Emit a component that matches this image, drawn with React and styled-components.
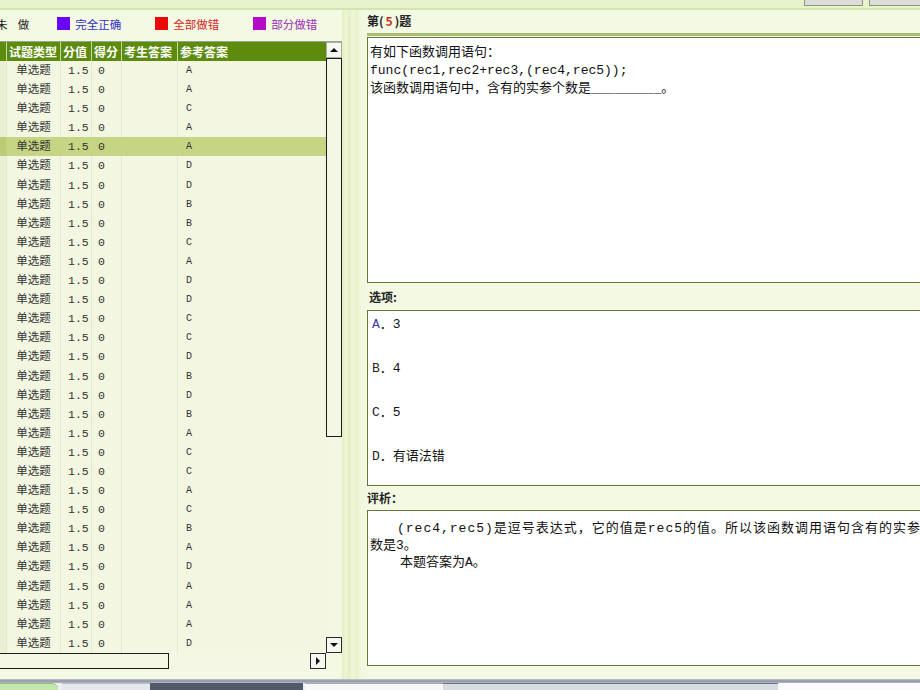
import React from 'react';
import styled, { createGlobalStyle } from 'styled-components';

const GlobalStyle = createGlobalStyle`
    html, body { margin: 0; padding: 0; }
    body {
        background: #f3f9e2;
        font-family: "Noto Sans CJK SC", sans-serif;
        overflow: hidden;
    }
`;

const MONO = `"Liberation Mono", "Noto Sans CJK SC", monospace`;

const Screen = styled.div`
    width: 920px;
    height: 690px;
    display: flex;
    flex-direction: column;
    overflow: hidden;
    background: #f3f9e2;
`;

const TopStrip = styled.div`
    height: 8px;
    flex: none;
    background: #e8f3cd;
    border-bottom: 2px solid #d3e5ae;
    display: flex;
    justify-content: flex-end;
    gap: 6px;
    margin-right: -8px;
`;

const TopButton = styled.div`
    width: 57px;
    height: 5px;
    background: #dcddd9;
    border: 1px solid #8c9a7c;
    border-top: none;
`;

const Main = styled.div`
    flex: 1;
    display: flex;
    min-height: 0;
`;

const LeftPanel = styled.div`
    width: 342px;
    flex: none;
    display: flex;
    flex-direction: column;
`;

const Legend = styled.div`
    height: 27px;
    padding-bottom: 4px;
    display: flex;
    align-items: center;
    margin-left: -4px;
    font-size: 11.5px;
    color: #222;
`;

const LegendText = styled.span`
    color: ${(p) => p.color || '#222'};
    margin-right: ${(p) => p.gap || 0}px;
    white-space: pre;
`;

const Swatch = styled.span`
    width: 13px;
    height: 13px;
    background: ${(p) => p.color};
    margin-right: 5px;
`;

const TableFrame = styled.div`
    border-top: 1px solid #9aa290;
    display: flex;
    flex-direction: column;
    height: 628px;
`;

const TableTop = styled.div`
    display: flex;
    height: 611px;
`;

const Grid = styled.div`
    width: 326px;
    overflow: hidden;
`;

const HeaderRow = styled.div`
    display: flex;
    height: 19px;
    background: #5d8b0e;
`;

const HeadCell = styled.div`
    width: ${(p) => p.w}px;
    flex: none;
    box-sizing: border-box;
    border-right: 1px solid #c9d9a2;
    color: #fff;
    font-size: 12px;
    font-weight: bold;
    line-height: 19px;
    padding-left: 2px;
    white-space: nowrap;
    overflow: hidden;
    &:last-child { border-right: none; }
`;

const Row = styled.div`
    display: flex;
    height: 19.1px;
    background: ${(p) => (p.selected ? '#c6d583' : '#f3f7e2')};
`;

const Cell = styled.div`
    width: ${(p) => p.w}px;
    flex: none;
    box-sizing: border-box;
    border-right: 1px solid ${(p) => (p.selected ? '#c6d583' : '#e3eace')};
    font-family: ${MONO};
    font-size: ${(p) => (p.small ? 10 : 11.5)}px;
    line-height: 19px;
    color: #333;
    text-align: ${(p) => p.align || 'left'};
    padding-left: ${(p) => p.pad || 0}px;
    white-space: nowrap;
    overflow: hidden;
    background: ${(p) => (p.edge ? (p.selected ? '#bccb76' : '#e9f0d3') : 'transparent')};
    &:last-child { border-right: none; }
`;

const VScroll = styled.div`
    width: 16px;
    display: flex;
    flex-direction: column;
    background: #f3f7e4;
`;

const ArrowButton = styled.div`
    width: 16px;
    height: 16px;
    flex: none;
    box-sizing: border-box;
    border: 1px solid ${(p) => (p.soft ? '#a8ad9c' : '#2a2a2a')};
    background: #f6f7f0;
    display: flex;
    align-items: center;
    justify-content: center;
`;

const Thumb = styled.div`
    height: 379px;
    flex: none;
    box-sizing: border-box;
    border: 1px solid #1c1c1c;
    background: #f3f7e4;
`;

const Track = styled.div`
    flex: 1;
`;

const HScrollRow = styled.div`
    display: flex;
    height: 17px;
`;

const HTrack = styled.div`
    width: 326px;
    display: flex;
    background: #f3f7e4;
`;

const HThumb = styled.div`
    width: 171px;
    margin-left: -2px;
    box-sizing: border-box;
    border: 1px solid #1c1c1c;
    height: 16px;
`;

const Corner = styled.div`
    width: 16px;
`;

const Splitter = styled.div`
    width: 25px;
    flex: none;
    background: linear-gradient(90deg, #e3eec2 0, #eff6d6 4px, #e4efc4 7px, #f0f7da 11px, #e7f1ca 15px, #f1f8dd 19px, #f3f9e2 25px);
`;

const RightPanel = styled.div`
    flex: 1;
    display: flex;
    flex-direction: column;
    overflow: hidden;
`;

const QTitle = styled.div`
    height: 23px;
    font-size: 12px;
    font-weight: bold;
    line-height: 21px;
    color: #222;
    border-bottom: 3px solid #a9be74;
    margin-right: -2px;
`;

const Red = styled.span`
    color: #c8321a;
    margin: 0 2px;
`;

const Box = styled.div`
    height: ${(p) => p.h}px;
    flex: none;
    box-sizing: border-box;
    background: #fff;
    border: 1px solid #66763a;
    border-right: none;
    padding: ${(p) => p.pt || 0}px 0 0 2px;
    font-family: ${MONO};
    font-size: 13px;
    color: #111;
    overflow: hidden;
`;

const Line = styled.div`
    line-height: ${(p) => p.lh || 18}px;
    white-space: nowrap;
    padding-left: ${(p) => p.indent || 0}px;
    letter-spacing: ${(p) => p.ls || 0}px;
`;

const Label = styled.div`
    height: ${(p) => p.h}px;
    flex: none;
    font-size: 12px;
    font-weight: bold;
    line-height: ${(p) => p.h}px;
    color: #222;
    padding-left: ${(p) => p.pad || 0}px;
`;

const Option = styled.div`
    line-height: 18px;
    height: 44px;
    padding-left: 2px;
    white-space: nowrap;
`;

const Letter = styled.span`
    color: ${(p) => (p.active ? '#3a3aa8' : '#222')};
`;

const Taskbar = styled.div`
    height: 11px;
    flex: none;
    display: flex;
    flex-direction: column;
`;

const TaskStripes = styled.div`
    height: 4px;
    background: linear-gradient(#c4c8d2, #8c94a4 50%, #b6bcc8);
`;

const TaskTabs = styled.div`
    flex: 1;
    display: flex;
    background: #eceef2;
`;

const TaskTab = styled.div`
    width: ${(p) => p.w}px;
    flex: ${(p) => (p.w ? 'none' : 1)};
    background: ${(p) => p.bg};
    border-top: 1px solid ${(p) => p.line || p.bg};
    border-top-right-radius: ${(p) => (p.round ? 6 : 0)}px;
    margin-right: ${(p) => p.gap || 0}px;
`;

const Triangle = ({ dir }) => {
    const pts = {
        up: '0,4 4,0 8,4',
        down: '0,0 8,0 4,4',
        right: '0,0 4,4 0,8',
    }[dir];
    const w = dir === 'right' ? 5 : 8;
    const h = dir === 'right' ? 8 : 5;
    return (
        <svg width={w} height={h} viewBox={`0 0 ${w} ${h}`}>
            <polygon points={pts} fill="#111" />
        </svg>
    );
};

const columns = [
    { key: 'edge', w: 7, title: '' },
    { key: 'type', w: 54, title: '试题类型' },
    { key: 'score', w: 31, title: '分值' },
    { key: 'got', w: 30, title: '得分' },
    { key: 'mine', w: 56, title: '考生答案' },
    { key: 'ref', w: 148, title: '参考答案' },
];

const answers = 'AACAADDBBCADDCCDBDBACCACBADAAAD'.split('');

export default function App() {
    return (
        <Screen>
            <GlobalStyle />
            <TopStrip>
                <TopButton />
                <TopButton />
            </TopStrip>
            <Main>
                <LeftPanel>
                    <Legend>
                        <LegendText gap={28}>{'未    做'}</LegendText>
                        <Swatch color="#6a05f5" />
                        <LegendText color="#3430c8" gap={34}>完全正确</LegendText>
                        <Swatch color="#ea0a0a" />
                        <LegendText color="#d81f1f" gap={34}>全部做错</LegendText>
                        <Swatch color="#b60bc6" />
                        <LegendText color="#9a2bb8">部分做错</LegendText>
                    </Legend>
                    <TableFrame>
                        <TableTop>
                            <Grid>
                                <HeaderRow>
                                    {columns.map((c) => (
                                        <HeadCell key={c.key} w={c.w}>{c.title}</HeadCell>
                                    ))}
                                </HeaderRow>
                                {answers.map((a, i) => {
                                    const sel = i === 4;
                                    return (
                                        <Row key={i} selected={sel}>
                                            <Cell w={7} edge selected={sel} />
                                            <Cell w={54} align="center" selected={sel}>单选题</Cell>
                                            <Cell w={31} pad={7} selected={sel}>1.5</Cell>
                                            <Cell w={30} pad={6} selected={sel}>0</Cell>
                                            <Cell w={56} selected={sel} />
                                            <Cell w={148} pad={8} small selected={sel}>{a}</Cell>
                                        </Row>
                                    );
                                })}
                            </Grid>
                            <VScroll>
                                <ArrowButton soft><Triangle dir="up" /></ArrowButton>
                                <Thumb />
                                <Track />
                                <ArrowButton><Triangle dir="down" /></ArrowButton>
                            </VScroll>
                        </TableTop>
                        <HScrollRow>
                            <HTrack>
                                <HThumb />
                                <Track />
                                <ArrowButton><Triangle dir="right" /></ArrowButton>
                            </HTrack>
                            <Corner />
                        </HScrollRow>
                    </TableFrame>
                </LeftPanel>
                <Splitter />
                <RightPanel>
                    <QTitle>
                        第(<Red>5</Red>)题
                    </QTitle>
                    <Box h={246} pt={6} style={{ marginTop: 1 }}>
                        <Line>有如下函数调用语句：</Line>
                        <Line>func(rec1,rec2+rec3,(rec4,rec5));</Line>
                        <Line>该函数调用语句中，含有的实参个数是_________。</Line>
                    </Box>
                    <Label h={27} pad={2}>选项:</Label>
                    <Box h={176} pt={5}>
                        <Option><Letter active>A</Letter>．3</Option>
                        <Option><Letter>B</Letter>．4</Option>
                        <Option><Letter>C</Letter>．5</Option>
                        <Option><Letter>D</Letter>．有语法错</Option>
                    </Box>
                    <Label h={24}>评析：</Label>
                    <Box h={156} pt={9}>
                        <Line lh={17} indent={27} ls={1}>(rec4,rec5)是逗号表达式，它的值是rec5的值。所以该函数调用语句含有的实参个</Line>
                        <Line lh={17}>数是3。</Line>
                        <Line lh={17} indent={30}>本题答案为A。</Line>
                    </Box>
                </RightPanel>
            </Main>
            <Taskbar>
                <TaskStripes />
                <TaskTabs>
                    <TaskTab w={58} bg="#c3e6ab" line="#8fc070" round gap={4} />
                    <TaskTab w={88} bg="#e6e8ee" line="#b8bcc8" />
                    <TaskTab w={153} bg="#525a6a" gap={2} />
                    <TaskTab w={138} bg="#f8f8f8" line="#a8acb8" />
                    <TaskTab w={335} bg="#d9dbe2" line="#6c7484" />
                    <TaskTab bg="#fbfbfb" />
                </TaskTabs>
            </Taskbar>
        </Screen>
    );
}
